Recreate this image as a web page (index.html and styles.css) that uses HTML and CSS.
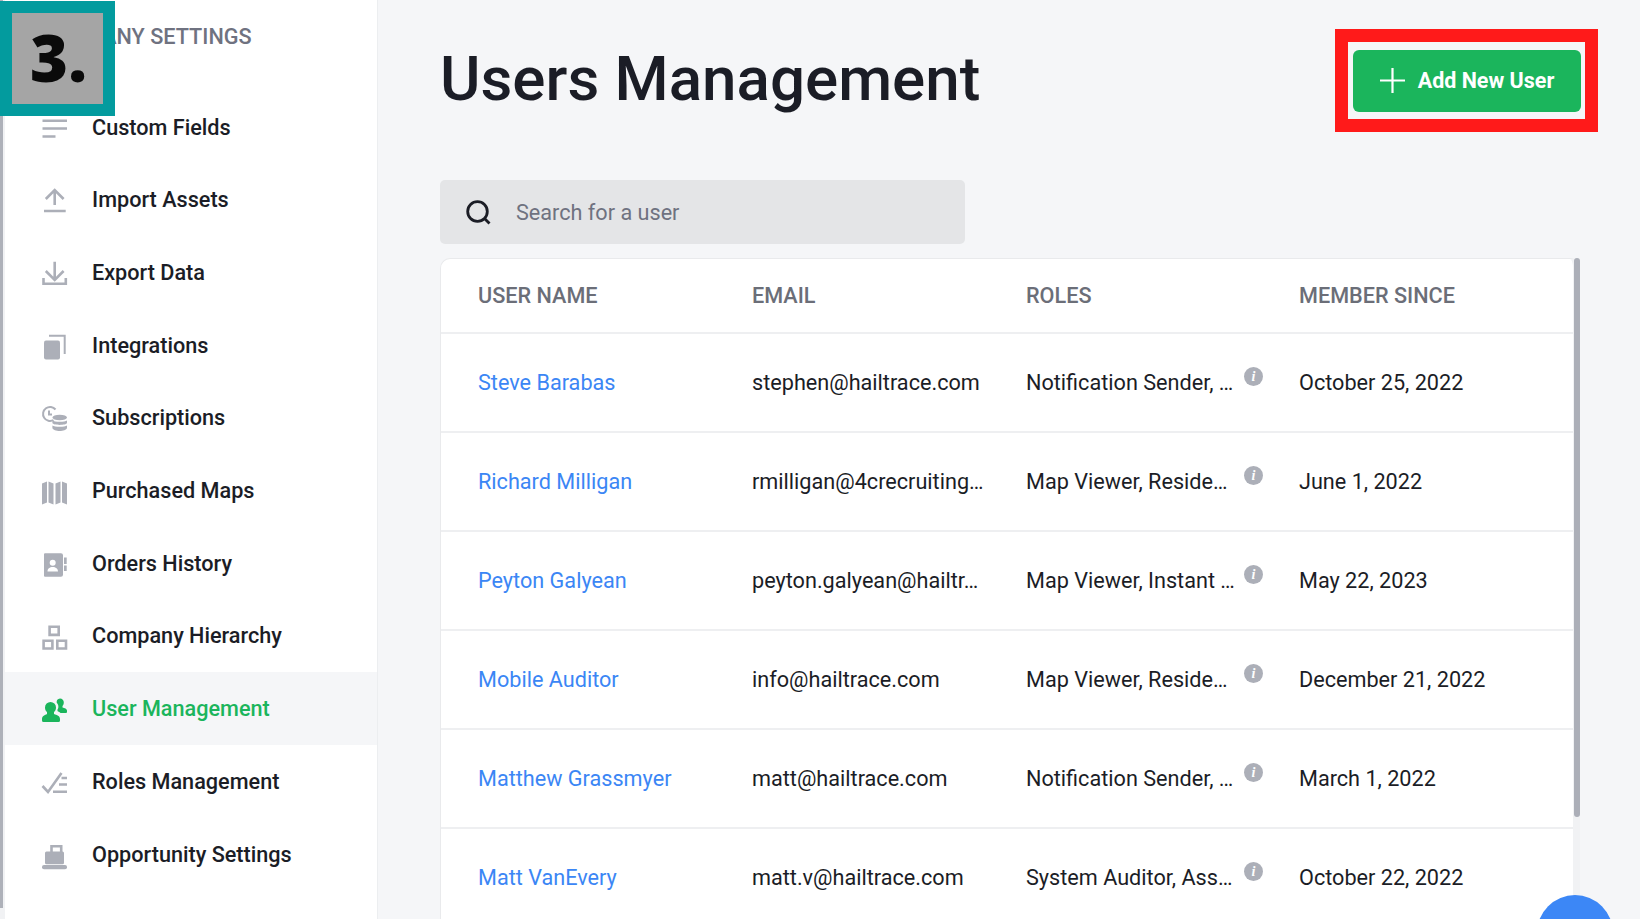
FILE: index.html
```html
<!DOCTYPE html>
<html lang="en">
<head>
<meta charset="utf-8">
<title>Users Management</title>
<link rel="stylesheet" href="styles.css">
</head>
<body>
<div class="app">
  <div class="left-scroll"><div class="left-thumb"></div></div>
  <aside class="sidebar">
    <div class="side-title">COMPANY SETTINGS</div>
    <nav class="side-list">
      <a class="side-item"><svg class="ic" viewBox="0 0 25 25"><path class="st" d="M.5 5.700h24.500M.5 13.500h24.500M.5 21.500h13"/></svg><span>Custom Fields</span></a>
      <a class="side-item"><svg class="ic" viewBox="0 0 25 25"><path class="st" d="M12.700 18V3M3.800 12l8.900-9 8.900 9M2 24h21.700"/></svg><span>Import Assets</span></a>
      <a class="side-item"><svg class="ic" viewBox="0 0 25 25"><path class="st" d="M12.700 1.700v18M3.800 11l8.900 8.800 8.900-8.800M1.500 18v5.700h22.300V18"/></svg><span>Export Data</span></a>
      <a class="side-item"><svg class="ic" viewBox="0 0 25 25"><path class="st thin" d="M7 2.800h15.700V21"/><rect class="fl" x="2" y="7.500" width="16" height="19" rx="2"/></svg><span>Integrations</span></a>
      <a class="side-item"><svg class="ic" viewBox="0 0 25 25"><path class="st thin" d="M11.500 15a7 7 0 1 1 2-10.500M7 5.500V9.500h3"/><ellipse class="fl" cx="17.700" cy="12.500" rx="7.300" ry="2.800"/><path class="fl" d="M10.400 15.500c2 1.800 12.600 1.800 14.600 0v2.500c-1 2.500-13.600 2.500-14.600 0zM10.400 20.500c2 1.800 12.600 1.800 14.600 0v2.500c-1 4-13.600 4-14.600 0z"/></svg><span>Subscriptions</span></a>
      <a class="side-item"><svg class="ic" viewBox="0 0 25 25"><path class="fl" d="M0 5.500l5-2v21l-5 2zM6.500 3.500l5 2v21l-5-2zM13.500 5.500l5-2v21l-5 2zM20 3.500l5 2v21l-5-2z"/></svg><span>Purchased Maps</span></a>
      <a class="side-item"><svg class="ic" viewBox="0 0 25 25"><path class="fl" fill-rule="evenodd" d="M3 2.300h16a2 2 0 0 1 2 2v19.400a2 2 0 0 1-2 2H3a1 1 0 0 1-1-1V3.300a1 1 0 0 1 1-1zM10.700 8.700a3 3 0 1 0 0 6 3 3 0 0 0 0-6zM5.500 20.500h10.500c0-2.800-2.300-4.500-5.300-4.500s-5.200 1.700-5.200 4.500z"/><rect class="fl" x="22" y="6.500" width="2.700" height="6.500"/><rect class="fl" x="22" y="14.500" width="2.700" height="5.500"/></svg><span>Orders History</span></a>
      <a class="side-item"><svg class="ic" viewBox="0 0 25 25"><path class="st" d="M7.600 3.800h9.100v8.100H7.600zM1.600 17.800h8.800v7.700H1.600zM15.300 17.800h8.700v7.700h-8.700z"/></svg><span>Company Hierarchy</span></a>
      <a class="side-item active"><svg class="ic" viewBox="0 -2.500 25 25"><path class="gr" d="M8.500 3.500a5.500 5.500 0 0 1 5.500 5.500c0 2-.8 3.600-2 4.600v2c3 1 6 2 6 5v1.400a1.500 1.500 0 0 1-1.500 1.500H1.500A1.500 1.500 0 0 1 0 22v-1.400c0-3 3-4 5-5v-2C3.800 12.600 3 11 3 9a5.500 5.500 0 0 1 5.500-5.500z"/><path class="gr" d="M18 0a3.800 3.800 0 0 1 3.800 4c0 1.500-.5 2.700-1.300 3.400V9c2 .5 4.500 1.300 4.500 3v1.500a1 1 0 0 1-1 1h-5.500c-1-1-2.500-1.500-3-2v-1.500c1-1.300 1-3 .7-4.300-.3-1-1-2-1.500-2.500A3.800 3.800 0 0 1 18 0z"/></svg><span>User Management</span></a>
      <a class="side-item"><svg class="ic" viewBox="0 0 25 25"><path class="st" d="M.5 17l5.500 6L19.500 4M19.500 9H25M17 15.500h8M11 22.700h14"/></svg><span>Roles Management</span></a>
      <a class="side-item"><svg class="ic" viewBox="0 0 25 25"><path class="st" d="M9.500 10V4.200h9.700V10"/><rect class="fl" x="3" y="9.500" width="19" height="12.700" rx="1.500"/><rect class="fl" x="0" y="23" width="25" height="4.200" rx="2"/></svg><span>Opportunity Settings</span></a>
    </nav>
  </aside>
  <main class="main">
    <header class="head">
      <h1 class="page-title">Users Management</h1>
      <div class="red-frame">
        <button class="add-btn" type="button"><svg class="plus" viewBox="0 0 25 25"><path d="M12.500 0v25M0 12.500h25"/></svg><span>Add New User</span></button>
      </div>
    </header>
    <div class="search">
      <svg class="search-ic" viewBox="0 0 25 25"><circle cx="11.500" cy="11.500" r="9.800"/><path d="M18.500 18.500l5 5"/></svg>
      <span>Search for a user</span>
    </div>
    <section class="card">
      <div class="row thead"><div>USER NAME</div><div>EMAIL</div><div>ROLES</div><div>MEMBER SINCE</div></div>
      <div class="row"><a class="name">Steve Barabas</a><div>stephen@hailtrace.com</div><div class="role"><span class="role-text">Notification Sender, …</span><i class="info">i</i></div><div>October 25, 2022</div></div>
      <div class="row"><a class="name">Richard Milligan</a><div>rmilligan@4crecruiting…</div><div class="role"><span class="role-text">Map Viewer, Reside…</span><i class="info">i</i></div><div>June 1, 2022</div></div>
      <div class="row"><a class="name">Peyton Galyean</a><div>peyton.galyean@hailtr…</div><div class="role"><span class="role-text">Map Viewer, Instant …</span><i class="info">i</i></div><div>May 22, 2023</div></div>
      <div class="row"><a class="name">Mobile Auditor</a><div>info@hailtrace.com</div><div class="role"><span class="role-text">Map Viewer, Reside…</span><i class="info">i</i></div><div>December 21, 2022</div></div>
      <div class="row"><a class="name">Matthew Grassmyer</a><div>matt@hailtrace.com</div><div class="role"><span class="role-text">Notification Sender, …</span><i class="info">i</i></div><div>March 1, 2022</div></div>
      <div class="row"><a class="name">Matt VanEvery</a><div>matt.v@hailtrace.com</div><div class="role"><span class="role-text">System Auditor, Ass…</span><i class="info">i</i></div><div>October 22, 2022</div></div>
      <div class="scroll-thumb"></div>
    </section>
  </main>
  <div class="fab"></div>
  <div class="step"><span>3.</span></div>
</div>
</body>
</html>
```
FILE: styles.css
```css
* { box-sizing: border-box; }
html, body { margin: 0; padding: 0; background: #fff; overflow: hidden; }
body { font-family: Roboto, "Liberation Sans", sans-serif; color: #1b1d26; }
.app { position: relative; display: flex; width: 1640px; height: 919px; overflow: hidden; background: #f5f6f8; }

.left-scroll { flex: 0 0 5px; background: #f1f2f4; }
.left-thumb { width: 2.500px; height: 908px; background: #aeb1b9; }

.sidebar { flex: 0 0 373px; background: #fff; border-right: 1px solid #eceef0; padding-top: 24px; }
.side-title { font-size: 21.650px; line-height: 26px; font-weight: 500; color: #6f7280; padding-left: 37px; }
.side-list { margin-top: 40.800px; }
.side-item { display: flex; align-items: center; gap: 25px; height: 72.700px; padding-left: 37px; font-size: 21.650px; font-weight: 500; color: #1b1d26; }
.side-item.active { background: #f5f6f8; color: #1bb55c; }
.ic { flex: 0 0 25px; width: 25px; height: 25px; overflow: visible; }
.st { fill: none; stroke: #acafb8; stroke-width: 2.600; }
.st.thin { stroke-width: 2; }
.fl { fill: #acafb8; }
.gr { fill: #1bb55c; }

.main { flex: 1; min-width: 0; padding: 29px 42px 0 62px; }
.head { display: flex; justify-content: space-between; align-items: center; height: 103px; }
.page-title { margin: 0 0 4px; font-size: 61.900px; line-height: 70px; font-weight: 500; color: #1b1d26; }
.red-frame { width: 263px; height: 103px; border: 13.500px solid #ff1a1a; background: #f5f6f8; display: flex; align-items: center; justify-content: center; }
.add-btn { display: flex; align-items: center; justify-content: center; gap: 13px; flex: 0 0 227.500px; height: 62px; margin-left: 1px; border: 0; border-radius: 6px; background: #1bb55c; color: #fff; font: 700 21.500px Roboto, sans-serif; padding: 0; }
.plus { width: 25px; height: 25px; fill: none; stroke: #fff; stroke-width: 2.200; }

.search { display: flex; align-items: center; gap: 25px; width: 525px; height: 64px; margin: 48px 0 14px; padding-left: 26px; background: #e4e5e7; border-radius: 5px; font-size: 21.650px; color: #6f7280; }
.search-ic { width: 25px; height: 25px; fill: none; stroke: #1b1d26; stroke-width: 2.800; }

.card { position: relative; width: 1140px; height: 700px; background: #fff; border: 1px solid #e9eaec; border-bottom: 0; border-radius: 10px 10px 0 0; border-right: 7px solid #f1f2f4; }
.row { display: grid; grid-template-columns: 274px 274px 273px 1fr; align-items: center; height: 99px; padding-left: 37px; font-size: 21.650px; border-bottom: 2px solid #eeeff1; }
.thead { height: 75px; font-weight: 500; color: #6b6e78; }
.name { color: #3b86f5; }
.role { display: flex; align-items: center; gap: 11px; }
.role-text { width: 207px; white-space: nowrap; }
.info { flex: 0 0 19px; width: 19px; height: 19px; margin-bottom: 12px; border-radius: 50%; background: #acafb8; color: #fff; font: italic 700 14px/19px "Liberation Serif", serif; text-align: center; }
.scroll-thumb { position: absolute; top: -1px; right: -7px; width: 6px; height: 559px; border-radius: 3px; background: #acafb8; }

.fab { position: absolute; left: 1537px; top: 895px; width: 76px; height: 76px; border-radius: 50%; background: #3c87f6; }
.step { position: absolute; left: 0; top: 1px; width: 115px; height: 115px; padding: 0 0 2px 2px; border: 12.500px solid #039b9e; background: #a5a5a5; display: flex; align-items: center; justify-content: center; font: 900 65px/1 "Noto Sans", "Open Sans", sans-serif; color: #0a0a0a; }
```
